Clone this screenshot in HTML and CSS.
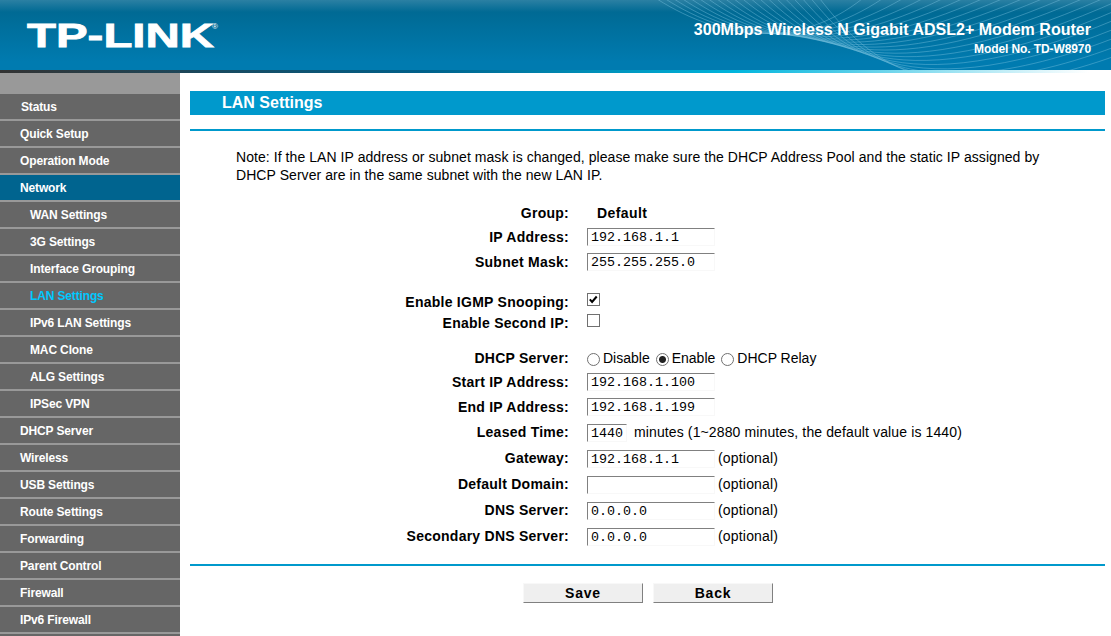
FILE: index.html
```
<!DOCTYPE html>
<html lang="en">
<head>
    <meta charset="UTF-8">
    <title>TD-W8970</title>
    <link rel="stylesheet" href="styles.css">
</head>
<body>
    <header class="banner">
        <svg class="waves" id="waves" width="471" height="70" viewBox="640 0 471 70"></svg>
        <svg class="logo" width="200" height="40" viewBox="0 0 200 40">
            <text class="logo-text" x="1" y="32" textLength="187" lengthAdjust="spacingAndGlyphs">TP-LINK</text>
            <text class="logo-reg" x="186" y="14">®</text>
        </svg>
        <div class="model">
            <h1>300Mbps Wireless N Gigabit ADSL2+ Modem Router</h1>
            <p>Model No. TD-W8970</p>
        </div>
    </header>
    <div class="banner-line"></div>

    <div class="page">
        <ul class="menu">
            <li class="first">Status</li>
            <li>Quick Setup</li>
            <li>Operation Mode</li>
            <li class="open">Network</li>
            <li class="sub">WAN Settings</li>
            <li class="sub">3G Settings</li>
            <li class="sub">Interface Grouping</li>
            <li class="sub current">LAN Settings</li>
            <li class="sub">IPv6 LAN Settings</li>
            <li class="sub">MAC Clone</li>
            <li class="sub">ALG Settings</li>
            <li class="sub">IPSec VPN</li>
            <li>DHCP Server</li>
            <li>Wireless</li>
            <li>USB Settings</li>
            <li>Route Settings</li>
            <li>Forwarding</li>
            <li>Parent Control</li>
            <li>Firewall</li>
            <li>IPv6 Firewall</li>
            <li></li>
        </ul>

        <main class="content">
            <h2>LAN Settings</h2>
            <hr>
            <p class="note">Note: If the LAN IP address or subnet mask is changed, please make sure the DHCP Address Pool and the static IP assigned by DHCP Server are in the same subnet with the new LAN IP.</p>

            <form>
                <div class="row group">
                    <label>Group:</label>
                    <b>Default</b>
                </div>
                <div class="row">
                    <label for="ip">IP Address:</label>
                    <input type="text" id="ip" value="192.168.1.1">
                </div>
                <div class="row">
                    <label for="mask">Subnet Mask:</label>
                    <input type="text" id="mask" value="255.255.255.0">
                </div>

                <div class="row check gap">
                    <label for="igmp">Enable IGMP Snooping:</label>
                    <span class="checkbox"><input type="checkbox" id="igmp" checked><svg width="9" height="9" viewBox="0 0 9 9"><path d="M0.8 4.4L3.1 7L7.7 1.5"/></svg></span>
                </div>
                <div class="row check">
                    <label for="second">Enable Second IP:</label>
                    <span class="checkbox"><input type="checkbox" id="second"></span>
                </div>

                <div class="row radios">
                    <label>DHCP Server:</label>
                    <input type="radio" name="dhcp" id="off"><span>Disable</span>
                    <input type="radio" name="dhcp" id="on" checked><span>Enable</span>
                    <input type="radio" name="dhcp" id="relay"><span>DHCP Relay</span>
                </div>
                <div class="row">
                    <label for="start">Start IP Address:</label>
                    <input type="text" id="start" value="192.168.1.100">
                </div>
                <div class="row">
                    <label for="end">End IP Address:</label>
                    <input type="text" id="end" value="192.168.1.199">
                </div>
                <div class="row lease">
                    <label for="lease">Leased Time:</label>
                    <input type="text" id="lease" value="1440">
                    <span>minutes (1~2880 minutes, the default value is 1440)</span>
                </div>
                <div class="row tall">
                    <label for="gateway">Gateway:</label>
                    <input type="text" id="gateway" value="192.168.1.1">
                    <span>(optional)</span>
                </div>
                <div class="row tall">
                    <label for="domain">Default Domain:</label>
                    <input type="text" id="domain" value="">
                    <span>(optional)</span>
                </div>
                <div class="row tall">
                    <label for="dns">DNS Server:</label>
                    <input type="text" id="dns" value="0.0.0.0">
                    <span>(optional)</span>
                </div>
                <div class="row tall">
                    <label for="dns2">Secondary DNS Server:</label>
                    <input type="text" id="dns2" value="0.0.0.0">
                    <span>(optional)</span>
                </div>

                <hr class="bottom">
                <div class="buttons">
                    <button type="button">Save</button>
                    <button type="button">Back</button>
                </div>
            </form>
        </main>
    </div>

    <script src="waves.js"></script>
</body>
</html>
```
FILE: styles.css
```
* {
    margin: 0;
    padding: 0;
    box-sizing: border-box;
}

body {
    height: 636px;
    overflow: hidden;
    background: #fff;
    color: #000;
    font-family: Arial, "Liberation Sans", sans-serif;
    font-size: 14px;
}

/* banner */
.banner {
    position: relative;
    display: flex;
    justify-content: space-between;
    height: 70px;
    padding: 15px 20px 0 26px;
    background: linear-gradient(#2b80a3 0, #006a94 12px, #007bb0 62px, #007bb0 100%);
    color: #fff;
}

.waves {
    position: absolute;
    top: 0;
    right: 0;
}

.waves path {
    fill: none;
    stroke: #7cc4e0;
    stroke-opacity: 0.42;
    stroke-width: 1;
}

.logo-text {
    font: bold 34px "Liberation Sans", sans-serif;
    fill: #fff;
    stroke: #fff;
    stroke-width: 0.8;
}

.logo-reg {
    font: 8px "Liberation Sans", sans-serif;
    fill: #fff;
}

.model {
    position: relative;
    padding-top: 5px;
    text-align: right;
}

.model h1 {
    font-size: 16px;
    line-height: 20px;
    letter-spacing: 0.02px;
}

.model p {
    font-size: 12px;
    font-weight: bold;
    letter-spacing: -0.1px;
    line-height: 18px;
}

.banner-line {
    height: 3px;
    background: linear-gradient(90deg, #333 0, #00608a 38%, #00b5dd 66%, #fff 98%);
}

.page {
    display: flex;
}

/* left menu */
.menu {
    width: 180px;
    padding-top: 21px;
    background: #999;
    list-style: none;
}

.menu li {
    height: 27px;
    padding-left: 20px;
    border-bottom: 2px solid #999;
    background: #666;
    color: #fff;
    font-size: 12px;
    font-weight: bold;
    letter-spacing: -0.14px;
    line-height: 26px;
}

.menu .first {
    padding-left: 21px;
}

.menu .open {
    background: #00648f;
}

.menu .sub {
    padding-left: 30px;
}

.menu .current {
    color: #00c8ff;
}

/* content */
.content {
    flex: 1;
    padding: 18px 6px 0 10px;
}

h2 {
    height: 24px;
    margin-bottom: 14px;
    padding-left: 32px;
    background: #0099cc;
    color: #fff;
    font-size: 16px;
    line-height: 23px;
}

hr {
    height: 2px;
    border: none;
    background: #0099cc;
}

.note {
    width: 830px;
    margin: 17px 0 17px 46px;
    letter-spacing: 0.065px;
    line-height: 18px;
}

.row {
    display: flex;
    height: 25px;
    line-height: 24px;
}

.row label {
    width: 379px;
    margin-right: 18px;
    font-weight: bold;
    letter-spacing: 0.25px;
    text-align: right;
}

.row.group {
    height: 24px;
}

.group b {
    margin-left: 10px;
    letter-spacing: 0.4px;
}

.row.check {
    height: 21px;
    line-height: 23px;
}

.row.gap {
    margin-top: 16px;
}

.row.radios {
    height: 24px;
    margin-top: 13px;
}

.row.tall {
    height: 26px;
    line-height: 26px;
}

input[type="text"] {
    width: 128px;
    height: 18px;
    margin-top: 3px;
    padding: 0 3px;
    border: 1px solid;
    border-color: #808080 #f8f8f8 #f8f8f8 #808080;
    background: #fff;
    font: 13.33px "Liberation Mono", monospace;
}

.lease input[type="text"] {
    width: 40px;
    margin-top: 4px;
    margin-right: 7px;
}

.lease span {
    letter-spacing: 0.12px;
}

.tall input[type="text"] {
    margin-top: 5px;
    margin-right: 3px;
}

.tall span {
    letter-spacing: 0.18px;
}

.checkbox {
    position: relative;
    width: 13px;
    height: 13px;
    margin-top: 2px;
}

.checkbox input {
    display: block;
    appearance: none;
    width: 13px;
    height: 13px;
    border: 1px solid #707070;
    background: #fff;
}

.checkbox svg {
    position: absolute;
    top: 2px;
    left: 2px;
}

.checkbox path {
    fill: none;
    stroke: #000;
    stroke-width: 2;
}

.radios input {
    appearance: none;
    width: 13px;
    height: 13px;
    margin-top: 7px;
    margin-right: 3px;
    border: 1px solid #707070;
    border-radius: 50%;
    background: #fff;
}

.radios input:checked {
    background: radial-gradient(circle, #222 3px, #fff 4px);
}

.radios span {
    margin-right: 6px;
}

.bottom {
    margin-top: 15px;
}

.buttons {
    display: flex;
    gap: 10px;
    margin: 17px 0 0 333px;
}

button {
    width: 120px;
    height: 20px;
    border: 1px solid;
    border-color: #f8f8f8 #808080 #808080 #f8f8f8;
    background: #efefef;
    color: #000;
    font: bold 14px Arial, "Liberation Sans", sans-serif;
    letter-spacing: 0.8px;
    line-height: 18px;
}
```
FILE: waves.js
```
// fan of thin curves behind the model name
const waves = document.getElementById('waves');
const count = 20;

for (let i = 0; i < count; i++) {
    const t = i / (count - 1);
    const path = document.createElementNS('http://www.w3.org/2000/svg', 'path');
    const start = 657 + 163 * t;
    const end = 862 + 380 * t;
    path.setAttribute('d', `M${start} -1 C${725 + 145 * t} ${42 + 20 * t * t} ${800 + 150 * t} ${48 + 105 * t * t} ${end} -1`);
    waves.appendChild(path);
}
```
